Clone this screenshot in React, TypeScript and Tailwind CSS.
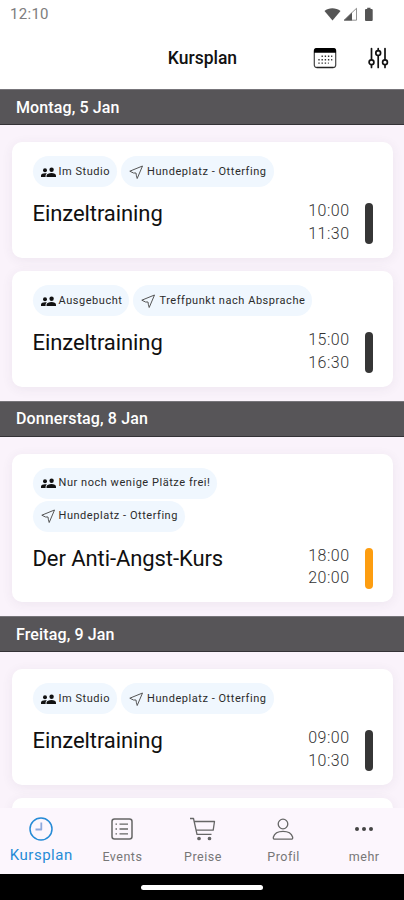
import React from 'react'

type Course = {
  status: string
  place: string
  title: string
  start: string
  end: string
  color: string
}

type Day = { label: string; courses: Course[]; more?: boolean }

const days: Day[] = [
  {
    label: 'Montag, 5 Jan',
    courses: [
      { status: 'Im Studio', place: 'Hundeplatz - Otterfing', title: 'Einzeltraining', start: '10:00', end: '11:30', color: 'bg-[#363636]' },
      { status: 'Ausgebucht', place: 'Treffpunkt nach Absprache', title: 'Einzeltraining', start: '15:00', end: '16:30', color: 'bg-[#363636]' },
    ],
  },
  {
    label: 'Donnerstag, 8 Jan',
    courses: [
      { status: 'Nur noch wenige Plätze frei!', place: 'Hundeplatz - Otterfing', title: 'Der Anti-Angst-Kurs', start: '18:00', end: '20:00', color: 'bg-[#fd9d10]' },
    ],
  },
  {
    label: 'Freitag, 9 Jan',
    courses: [
      { status: 'Im Studio', place: 'Hundeplatz - Otterfing', title: 'Einzeltraining', start: '09:00', end: '10:30', color: 'bg-[#363636]' },
    ],
    more: true,
  },
]

const PeopleIcon = () => (
  <svg width="15" height="11" viewBox="0 0 15 11" fill="#111" className="shrink-0">
    <circle cx="4" cy="3.2" r="2" />
    <circle cx="10.6" cy="2.7" r="2.2" />
    <path d="M0 10V8.6C0 7 2 6.2 4 6.2c.8 0 1.3.1 1.9.3C5 7.2 4.6 7.9 4.6 8.800V10z" />
    <path d="M5.500 10V8.700c0-1.800 2.500-2.700 5-2.700s4.500.9 4.500 2.700V10z" />
  </svg>
)

const SendIcon = () => (
  <svg width="15" height="15" viewBox="0 0 15 15" fill="none" stroke="#555" strokeWidth="1" strokeLinejoin="round" className="shrink-0">
    <path d="M13.500 1 .8 6.200 4.500 8 7 8l.3 2.200.9 3.300z" />
  </svg>
)

const Chip = ({ icon, text }: { icon: React.ReactNode; text: string }) => (
  <div className="flex h-[31px] items-center gap-[3px] rounded-full bg-[#f0f7fe] pt-px pr-[7px] pl-2 text-[11px] tracking-[0.54px] whitespace-nowrap text-[#2b2b2b]">
    {icon}
    <span>{text}</span>
  </div>
)

const CourseCard = ({ course }: { course: Course }) => (
  <div className="rounded-[10px] bg-white pt-[14px] pr-5 pb-[13.5px] pl-[20.5px] shadow-[0_2px_12px_rgba(70,50,80,0.07)]">
    <div className="flex flex-wrap gap-x-1 gap-y-[2px] pr-5">
      <Chip icon={<PeopleIcon />} text={course.status} />
      <Chip icon={<SendIcon />} text={course.place} />
    </div>
    <div className="mt-4 flex h-[41px]">
      <h2 className="flex-1 text-[22px] leading-[21px] tracking-[-0.08px] text-[#101010]">{course.title}</h2>
      <div className="mr-[15.5px] -mt-[3px] text-right text-[16px] leading-[22.5px] font-light tracking-[0.5px] text-[#333]">
        <div>{course.start}</div>
        <div>{course.end}</div>
      </div>
      <div className={`w-2 rounded-full ${course.color}`} />
    </div>
  </div>
)

const StatusBar = () => (
  <div className="flex h-7 items-center justify-between pr-[30px] pl-[10px]">
    <span className="pt-px text-[15px] tracking-[0.3px] text-[#7d7d7d]">12:10</span>
    <svg width="50" height="15" viewBox="0 0 50 15" fill="#555">
      <path d="M.5 4C4.500.2 12 .2 16.500 4l-8 9.500z" />
      <path d="M32.500 1.300V13.200H20z" fill="none" stroke="#777" strokeWidth="0.8" />
      <path d="M28 5.500V13.400H20z" />
      <path d="M43.200.8h3.300v1.300h1.200q1 0 1 1V13q0 1-1 1h-5.700q-1 0-1-1V3.100q0-1 1-1h1.200z" />
    </svg>
  </div>
)

const Header = () => (
  <div className="relative flex h-[61px] items-center justify-end gap-[30px] pr-[15px]">
    <h1 className="absolute inset-x-0 pl-px text-center text-[17.5px] font-medium text-[#111]">Kursplan</h1>
    <svg width="24" height="22" viewBox="0 0 24 22" fill="none" className="relative -top-px">
      <rect x="1.300" y="1.500" width="21.400" height="19" rx="2.500" stroke="#444" strokeWidth="1.200" />
      <path d="M1 5.700V3.500Q1 1 3.500 1h17Q23 1 23 3.500V5.700z" fill="#000" />
      <path d="M3.500 20.500h17" stroke="#222" strokeWidth="1.500" />
      <g stroke="#333" strokeWidth="1.400" strokeDasharray="1.400 1.800">
        <path d="M8.500 9.300h10.800M5.300 12.700h14M5.300 16.100h10.500" />
      </g>
    </svg>
    <svg width="22" height="22" viewBox="0 0 22 22" fill="none" stroke="#111" strokeWidth="1.700" strokeLinecap="round" className="relative -top-px">
      <path d="M4.500 1.500V12.500M4.500 18v2.500M11.200 1.500v2M11.200 8.700v11.800M18 1.500V12.500M18 18v2.500" />
      <circle cx="4.500" cy="15.300" r="2.400" />
      <circle cx="11.200" cy="6.100" r="2.400" />
      <circle cx="18" cy="15.300" r="2.400" />
    </svg>
  </div>
)

const icons = {
  clock: (
    <>
      <circle cx="12" cy="12" r="11" strokeWidth="1.500" />
      <path d="M12.300 5.500v7H6.500" stroke="#8fa8dc" strokeWidth="1.800" />
    </>
  ),
  list: (
    <>
      <rect x="2" y="2" width="20" height="20" rx="2.500" strokeWidth="1.500" />
      <path d="M9.500 7.200h8.500M9.500 12h8.500M9.500 16.800h8.500" />
      <path d="M5.500 7.200h1.500M5.500 12h1.500M5.500 16.800h1.500" />
    </>
  ),
  cart: (
    <>
      <path d="M0 1.500h3.500L7 17.300h14.500M4.500 4.500h20l-1.300 8.700H6.200" />
      <circle cx="9" cy="21.500" r="1.200" fill="currentColor" />
      <circle cx="19.500" cy="21.500" r="1.200" fill="currentColor" />
    </>
  ),
  person: (
    <>
      <circle cx="12" cy="7" r="4.800" />
      <path d="M4 22.200C2.500 22.200 2 21.300 2.400 20c1-3.500 4.600-5.700 9.600-5.700s8.600 2.200 9.600 5.700c.4 1.300-.1 2.200-1.600 2.200z" />
    </>
  ),
  dots: (
    <g fill="#444" stroke="none">
      <circle cx="5" cy="12" r="2" />
      <circle cx="12" cy="12" r="2" />
      <circle cx="19" cy="12" r="2" />
    </g>
  ),
}

const tabs: { icon: keyof typeof icons; label: string }[] = [
  { icon: 'clock', label: 'Kursplan' },
  { icon: 'list', label: 'Events' },
  { icon: 'cart', label: 'Preise' },
  { icon: 'person', label: 'Profil' },
  { icon: 'dots', label: 'mehr' },
]

const TabBar = () => (
  <nav className="grid h-[66px] shrink-0 grid-cols-5 bg-[#fcf6fd] pl-px">
    {tabs.map((tab, i) => (
      <div key={tab.label} className={`flex flex-col items-center pt-[9px] ${i === 0 ? 'text-[#268bd6]' : 'text-[#666]'}`}>
        <svg width="24" height="24" viewBox="0 0 24 24" fill="none" stroke="currentColor" strokeWidth="1.300" strokeLinejoin="round" className="overflow-visible">
          {icons[tab.icon]}
        </svg>
        <span className={i === 0 ? 'mt-1 text-[15px] leading-5 tracking-[0.5px]' : 'mt-[6px] pl-px text-[12.5px] leading-5 tracking-[0.5px] text-[#777]'}>
          {tab.label}
        </span>
      </div>
    ))}
  </nav>
)

export default function App() {
  return (
    <div className="flex h-[900px] w-[404px] flex-col overflow-hidden bg-white font-[Roboto,sans-serif]">
      <StatusBar />
      <Header />
      <main className="min-h-0 flex-1 overflow-hidden bg-[#faf3fb]">
        {days.map((day) => (
          <section key={day.label}>
            <div className="flex h-9 items-center border-y border-t-[#77757a] border-b-[#343236] bg-[#575558] px-4 pt-px text-[16px] font-medium tracking-[0.12px] text-white">
              {day.label}
            </div>
            <div className="flex flex-col gap-[13.5px] pt-[17px] pr-[11px] pb-[14px] pl-3">
              {day.courses.map((course) => (
                <CourseCard key={course.start} course={course} />
              ))}
              {day.more && <div className="h-8 rounded-[10px] bg-white shadow-[0_2px_12px_rgba(70,50,80,0.07)]" />}
            </div>
          </section>
        ))}
      </main>
      <TabBar />
      <div className="flex h-[26px] shrink-0 items-center justify-center bg-black">
        <div className="h-[5px] w-[122px] rounded-full bg-white" />
      </div>
    </div>
  )
}
